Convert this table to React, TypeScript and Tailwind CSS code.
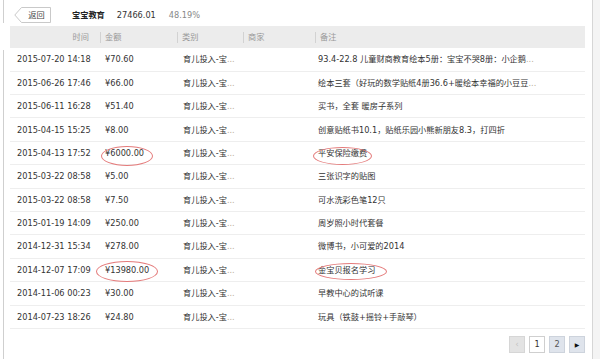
import React from "react";

type Row = {
  date: string;
  amount: string;
  remark: string;
  more?: boolean;
  circleAmount?: { l: number; t: number; w: number; h: number };
  circleRemark?: { l: number; t: number; w: number; h: number };
};

const rows: Row[] = [
  { date: "2015-07-20 14:18", amount: "¥70.60", remark: "93.4-22.8 儿童财商教育绘本5册：宝宝不哭8册：小企鹅", more: true },
  { date: "2015-06-26 17:46", amount: "¥66.00", remark: "绘本三套（好玩的数学贴纸4册36.6+暖绘本幸福的小豆豆", more: true },
  { date: "2015-06-11 16:28", amount: "¥51.40", remark: "买书，全套 暖房子系列" },
  { date: "2015-04-15 15:25", amount: "¥8.00", remark: "创意贴纸书10.1，贴纸乐园小熊新朋友8.3，打四折" },
  {
    date: "2015-04-13 17:52",
    amount: "¥6000.00",
    remark: "平安保险缴费",
    circleAmount: { l: 1, t: 4, w: 52, h: 20 },
    circleRemark: { l: -2, t: 5, w: 59, h: 18 },
  },
  { date: "2015-03-22 08:58", amount: "¥5.00", remark: "三张识字的贴图" },
  { date: "2015-03-22 08:58", amount: "¥7.50", remark: "可水洗彩色笔12只" },
  { date: "2015-01-19 14:09", amount: "¥250.00", remark: "周岁照小时代套餐" },
  { date: "2014-12-31 15:34", amount: "¥278.00", remark: "微博书，小可爱的2014" },
  {
    date: "2014-12-07 17:09",
    amount: "¥13980.00",
    remark: "金宝贝报名学习",
    circleAmount: { l: -4, t: 2, w: 62, h: 21 },
    circleRemark: { l: 0, t: 4, w: 72, h: 17 },
  },
  { date: "2014-11-06 00:23", amount: "¥30.00", remark: "早教中心的试听课" },
  { date: "2014-07-23 18:26", amount: "¥24.80", remark: "玩具（铁鼓+摇铃+手敲琴）" },
];

function Circle({ c }: { c: { l: number; t: number; w: number; h: number } }) {
  return (
    <span
      className="absolute rounded-[50%] border border-[#e47b7b] pointer-events-none z-10"
      style={{ left: c.l, top: c.t, width: c.w, height: c.h }}
    />
  );
}

const FONT = "[font-family:'DejaVu_Sans','Noto_Sans_CJK_SC',sans-serif]";

export default function App() {
  return (
    <div className={`w-[600px] h-[359px] bg-white flex overflow-hidden text-[8.2px] text-[#333] ${FONT}`}>
      {/* left strip */}
      <div className="w-[4px] flex flex-col">
        <div className="h-[23px] border-r border-[#cfcfcf]" />
        <div className="h-[27px]" />
        <div className="flex-1 border-r border-[#cfcfcf]" />
      </div>

      {/* main */}
      <div className="w-[588px] pl-[6px] pr-[7px] flex flex-col">
        {/* top bar */}
        <div className="h-[26px] flex items-start pt-[7px]">
          <div className="relative ml-[4px] w-[37px] h-[16px] flex items-center justify-center pl-[8px]">
            <svg className="absolute inset-0" width="37" height="16" viewBox="0 0 37 16">
              <path d="M7.5 0.5 H36.5 V15.5 H7.5 L0.8 8 Z" fill="#fff" stroke="#c9c9c9" />
            </svg>
            <span className="relative text-[#444]">返回</span>
          </div>
          <div className="ml-[21px] h-[16px] flex items-center">
            <span className="font-bold text-[#222]">宝宝教育</span>
            <span className="ml-[12px] text-[#333]">27466.01</span>
            <span className="ml-[13px] text-[#888]">48.19%</span>
          </div>
        </div>

        {/* header */}
        <div className="h-[22.3px] bg-[#ececec] grid grid-cols-[90px_77px_66px_72px_1fr] items-center text-[#999]">
          <div className="text-right pr-[11px]">时间</div>
          <div className="flex items-center">
            <span className="w-px h-[11px] bg-[#d2d2d2]" />
            <span className="ml-[4px]">金额</span>
          </div>
          <div className="flex items-center">
            <span className="w-px h-[11px] bg-[#d2d2d2]" />
            <span className="ml-[4px]">类别</span>
          </div>
          <div className="flex items-center">
            <span className="w-px h-[11px] bg-[#d2d2d2]" />
            <span className="ml-[4px]">商家</span>
          </div>
          <div className="flex items-center">
            <span className="w-px h-[11px] bg-[#d2d2d2]" />
            <span className="ml-[4px]">备注</span>
          </div>
        </div>

        {/* rows */}
        {rows.map((r, i) => (
          <div
            key={i}
            className="h-[23.4px] border-b border-[#eeeeee] grid grid-cols-[90px_77px_66px_72px_1fr] items-center"
          >
            <div className="pl-[7px] whitespace-nowrap">{r.date}</div>
            <div className="relative h-full flex items-center pl-[5px] whitespace-nowrap">
              {r.circleAmount && <Circle c={r.circleAmount} />}
              {r.amount}
            </div>
            <div className="pl-[6px] whitespace-nowrap">
              育儿投入-宝<span className="text-[#b9ad95]">...</span>
            </div>
            <div />
            <div className="relative h-full flex items-center pl-[3px] whitespace-nowrap">
              {r.circleRemark && <Circle c={r.circleRemark} />}
              {r.remark}
              {r.more && <span className="text-[#b9ad95]">...</span>}
            </div>
          </div>
        ))}

        {/* pagination */}
        <div className="mt-[7px] flex justify-end gap-[4px]">
          <div className="w-[16px] h-[17px] bg-[#e3e3e3] border border-[#d6d6d6] flex items-center justify-center text-[#c4c4c4] text-[9px]">
            ‹
          </div>
          <div className="w-[16px] h-[17px] bg-white border border-[#cfcfcf] flex items-center justify-center text-[#333]">
            1
          </div>
          <div className="w-[16px] h-[17px] bg-[#dfe4ec] border border-[#cdd3dc] flex items-center justify-center text-[#555]">
            2
          </div>
          <div className="w-[16px] h-[17px] bg-[#dfe4ec] border border-[#cdd3dc] flex items-center justify-center text-[#111] text-[6px]">
            ▶
          </div>
        </div>
      </div>

      {/* right strip */}
      <div className="w-px bg-[#d6d6d6]" />
      <div className="flex-1 bg-[#f4f4f4]" />
    </div>
  );
}
